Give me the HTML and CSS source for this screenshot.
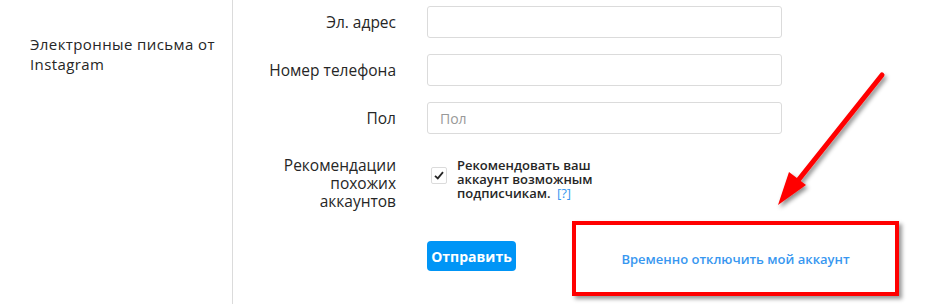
FILE: index.html
```html
<!DOCTYPE html>
<html lang="ru">
<head>
  <meta charset="UTF-8" />
  <meta name="viewport" content="width=device-width, initial-scale=1.0"/>
  <title>Редактировать профиль</title>
  <link rel="stylesheet" href="styles.css">
</head>
<body>
  <div class="page">
    <aside class="sidebar">
      <a class="side-item" href="#">Электронные письма от Instagram</a>
    </aside>

    <main class="content">
      <form class="profile-form">
        <div class="row">
          <label class="field-label" for="email">Эл. адрес</label>
          <input class="field" type="email" id="email" />
        </div>
        <div class="row">
          <label class="field-label" for="phone">Номер телефона</label>
          <input class="field" type="tel" id="phone" />
        </div>
        <div class="row">
          <label class="field-label" for="gender">Пол</label>
          <input class="field" type="text" id="gender" placeholder="Пол" />
        </div>
        <div class="row row-top">
          <label class="field-label multi">Рекомендации похожих аккаунтов</label>
          <div class="check-wrap">
            <span class="check-box">
              <svg width="10" height="9" viewBox="0 0 10 9"><path d="M1 4.8 L3.8 7.4 L9 1.2" fill="none" stroke="#262626" stroke-width="1.8"/></svg>
            </span>
            <span class="check-text">Рекомендовать ваш аккаунт возможным подписчикам. <a href="#" class="help">[?]</a></span>
          </div>
        </div>
        <div class="row row-actions">
          <span></span>
          <div class="actions">
            <button type="submit" class="submit-btn">Отправить</button>
            <div class="disable-box">
              <a href="#" class="disable-link">Временно отключить мой аккаунт</a>
            </div>
          </div>
        </div>
      </form>
    </main>

    <svg class="arrow" width="929" height="304" viewBox="0 0 929 304">
      <defs>
        <filter id="shade" x="-20%" y="-20%" width="140%" height="140%">
          <feDropShadow dx="2" dy="3" stdDeviation="2" flood-color="#000" flood-opacity="0.45"/>
        </filter>
      </defs>
      <g filter="url(#shade)">
        <line x1="882" y1="75" x2="792" y2="188" stroke="#ff0000" stroke-width="5" stroke-linecap="round"/>
        <polygon points="778,205 789,172 806,185" fill="#ff0000"/>
      </g>
    </svg>
  </div>
</body>
</html>
```

FILE: styles.css
```css
body {
  margin: 0;
  font-family: "Open Sans", "Liberation Sans", sans-serif;
  background: #fff;
  color: #262626;
}

.page {
  position: relative;
  display: flex;
  width: 929px;
  height: 304px;
  overflow: hidden;
}

.sidebar {
  width: 233px;
  flex-shrink: 0;
  border-right: 1px solid #dbdbdb;
  padding-top: 34px;
  box-sizing: border-box;
}

.side-item {
  display: block;
  padding: 0 4px 0 30px;
  font-size: 15px;
  line-height: 20px;
  letter-spacing: 0.4px;
  color: #262626;
  text-decoration: none;
}

.content {
  flex: 1;
  padding-top: 6px;
}

.row {
  display: grid;
  grid-template-columns: 163px 1fr;
  column-gap: 31px;
  align-items: center;
  margin-bottom: 16px;
}

.row-top {
  align-items: start;
  padding-top: 6px;
}

.field-label {
  text-align: right;
  font-size: 15.5px;
  line-height: 18px;
  color: #262626;
}

.field-label.multi {
  padding-left: 40px;
}

.field {
  width: 355px;
  height: 32px;
  box-sizing: border-box;
  border: 1px solid #dbdbdb;
  border-radius: 3px;
  background: #fff;
  padding: 0 12px;
  font-family: inherit;
  font-size: 14px;
  color: #262626;
}

.field::placeholder {
  color: #999;
}

.check-wrap {
  display: flex;
  gap: 10px;
  align-items: flex-start;
}

.check-box {
  width: 14px;
  height: 15px;
  margin-top: 11px;
  margin-left: 4px;
  border: 1px solid #dbdbdb;
  border-radius: 2px;
  display: flex;
  align-items: center;
  justify-content: center;
}

.check-text {
  width: 150px;
  padding-top: 2px;
  font-size: 13px;
  font-weight: 600;
  line-height: 14px;
  color: #262626;
}

.help {
  color: #3897f0;
  text-decoration: none;
  font-weight: 400;
  margin-left: 3px;
}

.row-actions {
  margin-top: -10px;
}

.actions {
  display: flex;
  align-items: center;
  gap: 56px;
}

.submit-btn {
  width: 89px;
  height: 30px;
  border: none;
  border-radius: 4px;
  background: #0095f6;
  color: #fff;
  font-family: inherit;
  font-size: 14px;
  font-weight: 700;
  padding: 0;
}

.disable-box {
  width: 327px;
  height: 75px;
  box-sizing: border-box;
  border: 4px solid #ff0000;
  box-shadow: 3px 3px 4px rgba(0, 0, 0, 0.4);
  display: flex;
  align-items: center;
  justify-content: center;
  margin-top: 5px;
}

.disable-link {
  color: #3897f0;
  font-size: 13px;
  font-weight: 600;
  text-decoration: none;
}

.arrow {
  position: absolute;
  left: 0;
  top: 0;
  pointer-events: none;
}
```
